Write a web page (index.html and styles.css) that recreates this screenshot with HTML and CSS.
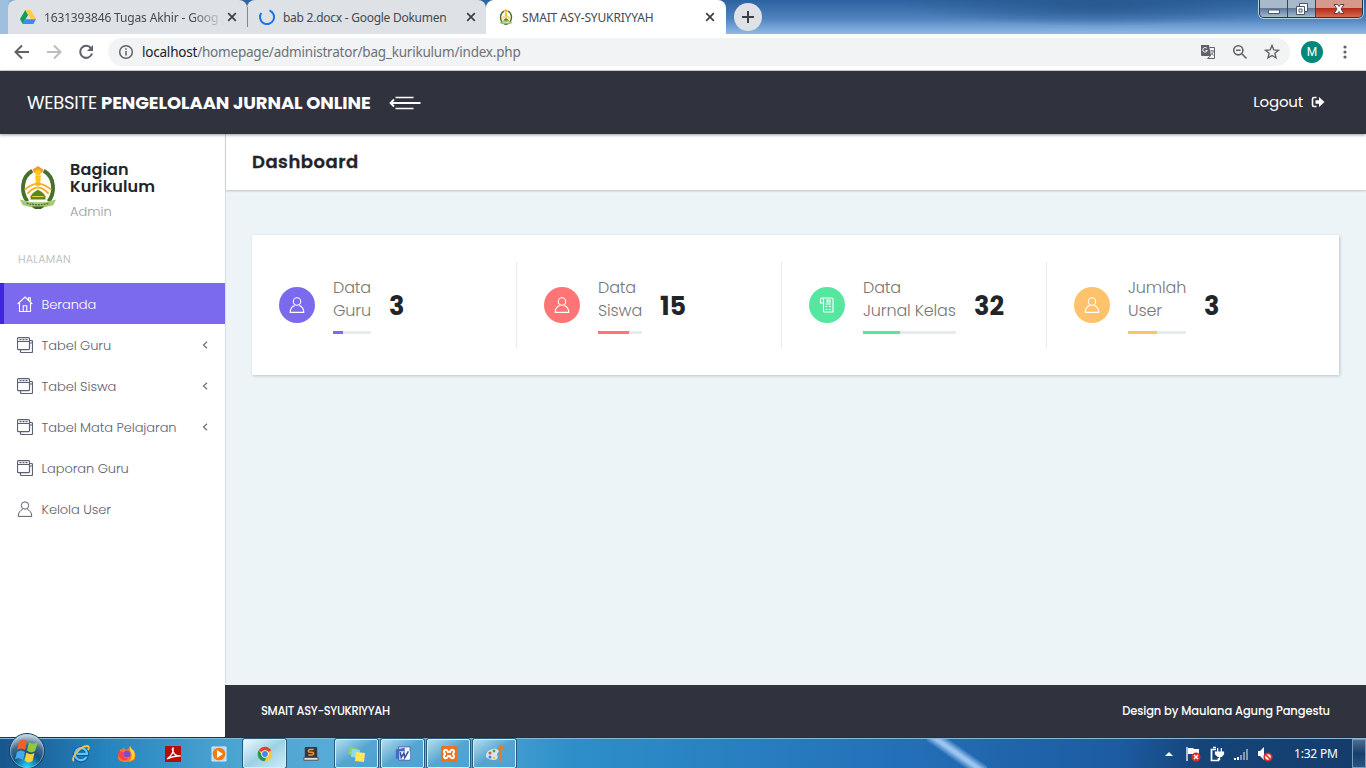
FILE: index.html
```html
<!DOCTYPE html>
<html lang="id">
<head>
<meta charset="utf-8">
<title>SMAIT ASY-SYUKRIYYAH</title>
<link rel="stylesheet" href="styles.css">
</head>
<body>
<svg class="defs" aria-hidden="true">
  <symbol id="user" viewBox="0 0 16 16"><circle cx="8" cy="4.500" r="3.700"/><path d="M5.700 8.500C3 9.500 1.300 11.500 1.200 15.400h13.600C14.700 11.500 13 9.500 10.300 8.500"/></symbol>
  <symbol id="windows" viewBox="0 0 16 16"><path d="M1.500.6h10q1 0 1 1v10q0 1-1 1h-10q-1 0-1-1v-10q0-1 1-1zM.5 4.500h12M2.500 2.600h2M5.500 2.600h2M8.500 2.600h2M12.500 3.500h2q1 0 1 1v10q0 1-1 1h-10q-1 0-1-1v-2M12.500 6h3"/></symbol>
  <symbol id="emblem" viewBox="0 0 40 46"><path d="M14 6C2 13 2 29 9 38M26 6c12 7 12 23 5 32" fill="none" stroke="#47702b" stroke-width="4"/><path d="M14 5l6-4 6 4-2 3h-8z" fill="#f29c2b"/><circle cx="20" cy="8" r="3" fill="#ffc51b"/><path d="M17 11h6l-1 11h-4z" fill="#ffc51b"/><path d="M6 26q14-13 28 0M9 30q11-13 22 0M12 34q8-12 16 0" fill="none" stroke="#f9ad24" stroke-width="2"/><path d="M12 36q1-7 8-10 7 3 8 10z" fill="#538b20"/><path d="M20 26v-4M14 33h12" stroke="#ffd348"/><path d="M1 36q19 6 38 0l-3 6q-16 5-32 0z" fill="#a9ca79"/><path d="M8 40q12 3 24 0" fill="none" stroke="#4f752b" stroke-width="1.500" stroke-dasharray="2 1"/><path d="M13 43.500h14l-4 2.500h-6z" fill="#3e621f"/></symbol>
  <symbol id="close" viewBox="0 0 10 10"><path d="M1.200 1.200l7.600 7.600M8.800 1.200L1.200 8.800" stroke="#3c4043" stroke-width="1.700"/></symbol>
</svg>

<header class="browser">
  <div class="tabs">
    <div class="tab">
      <svg class="fav" viewBox="0 0 16 14"><path d="M5.300 0L0 9l2.700 5 5.400-9z" fill="#0f9d58"/><path d="M5.300 0h5.400L16 9h-5.300z" fill="#ffcd40"/><path d="M5.400 9.300H16L13.300 14H2.700z" fill="#4285f4"/></svg>
      <span class="tab-title fade t1">1631393846 Tugas Akhir - Googl</span>
      <svg class="x"><use href="#close"/></svg>
    </div>
    <div class="tab second">
      <svg class="fav" viewBox="0 0 16 16"><path d="M10.500 1.500A7 7 0 1 1 2.300 4" fill="none" stroke="#1a73e8" stroke-width="2"/></svg>
      <span class="tab-title t2">bab 2.docx - Google Dokumen</span>
      <svg class="x"><use href="#close"/></svg>
    </div>
    <div class="tab active">
      <svg class="fav"><use href="#emblem"/></svg>
      <span class="tab-title t3">SMAIT ASY-SYUKRIYYAH</span>
      <svg class="x"><use href="#close"/></svg>
    </div>
    <svg class="plus" viewBox="0 0 28 28"><circle cx="14" cy="14" r="14" fill="#dee1e6"/><path d="M14 8v12M8 14h12" stroke="#3c4043" stroke-width="2"/></svg>
    <div class="win">
      <span><svg viewBox="0 0 14 14"><path d="M1.500 8h11v3.500h-11z" fill="#fff" stroke="#4c566b"/></svg></span>
      <span><svg viewBox="0 0 14 14"><path d="M4.500 1.500h8v8h-8z" fill="#fff" stroke="#4c566b"/><path d="M1.500 4.500h8v8h-8zM4 7h3v3H4z" fill="#fff" stroke="#4c566b"/></svg></span>
      <span class="red"><svg viewBox="0 0 14 14"><path d="M2 2.500h3.500L7 4.500l1.500-2H12L9 7l3 4.500H8.500L7 9.500l-1.500 2H2L5 7z" fill="#fff" stroke="#5c3e4a"/></svg></span>
    </div>
  </div>
  <div class="toolbar">
    <svg class="nav" viewBox="0 0 16 16"><path d="M15 8H2M8 1.500L1.500 8 8 14.500" stroke="#5f6368"/></svg>
    <svg class="nav" viewBox="0 0 16 16"><path d="M1 8h13M8 1.500L14.500 8 8 14.500" stroke="#babcbe"/></svg>
    <svg class="nav" viewBox="0 0 16 16"><path d="M13 4.200A6 6 0 1 0 14 9.500" stroke="#5f6368"/><path d="M15 1v6H9z" fill="#5f6368"/></svg>
    <div class="address">
      <svg class="info" viewBox="0 0 16 16"><circle cx="8" cy="8" r="6.300"/><path d="M8 7v4.500M8 4.300v1.500"/></svg>
      <span class="url"><b>localhost</b>/homepage/administrator/bag_kurikulum/index.php</span>
      <svg viewBox="0 0 16 16"><path d="M1 1h8l2 11H2q-1 0-1-1z" fill="#5f6368"/><path d="M9.500 3.500h5v11h-7l3-2.500" fill="none" stroke="#5f6368"/><path d="M7 4.500a2.300 2.300 0 1 0 .3 2H5.500" fill="none" stroke="#fff"/><path d="M10 7h4M12 6v1M13.500 7q-.5 3-3 4M11 8.500l2.500 3" fill="none" stroke="#5f6368" stroke-width=".8"/></svg>
      <svg viewBox="0 0 16 16"><g fill="none" stroke="#5f6368" stroke-width="1.600"><circle cx="6.300" cy="6.300" r="4.600"/><path d="M9.800 9.800l4.700 4.700M4 6.300h4.600"/></g></svg>
      <svg viewBox="0 0 16 16"><path d="M8 1.600l1.800 4.300 4.700.4-3.600 3 1.100 4.600L8 11.500l-4 2.400 1.100-4.600-3.600-3 4.700-.4z" fill="none" stroke="#5f6368" stroke-width="1.400"/></svg>
    </div>
    <div class="avatar">M</div>
    <svg class="dots" viewBox="0 0 4 16"><circle cx="2" cy="3" r="1.600"/><circle cx="2" cy="8" r="1.600"/><circle cx="2" cy="13" r="1.600"/></svg>
  </div>
</header>

<div class="site">
  <div class="topbar">
    <h1><span class="brand-light">WEBSITE</span><span class="brand-bold">PENGELOLAAN JURNAL ONLINE</span></h1>
    <svg class="toggle" viewBox="0 0 32 14"><path d="M1.500 7H31.500" stroke-width="2"/><path d="M6.500 1.500h18M6.500 12.500h18" stroke-width="1.400"/><path d="M5 3.500L1.500 7 5 10.500" stroke-width="1.800"/></svg>
    <a class="logout"><span>Logout</span><svg viewBox="0 0 14 12"><path d="M5.500 1.500H3Q1.500 1.500 1.500 3v6q0 1.500 1.500 1.500h2.500" fill="none" stroke="#fff" stroke-width="1.600"/><path d="M4.500 4.200h3.500V1L13.500 6 8 11V7.800H4.500z" fill="#fff"/></svg></a>
  </div>
  <div class="body">
    <aside class="sidebar">
      <div class="profile">
        <svg class="logo"><use href="#emblem"/></svg>
        <div><h2>Bagian<br>Kurikulum</h2><p>Admin</p></div>
      </div>
      <div class="heading">HALAMAN</div>
      <nav>
        <a class="item current"><svg class="ic" viewBox="0 0 16 16"><path d="M.7 8L8 1l7.300 7M2.500 6.500v9h11v-9M11.500 4V1.800h1.800v4M6.200 15.500V9.800h3.600v5.700"/></svg><span>Beranda</span></a>
        <a class="item"><svg class="ic"><use href="#windows"/></svg><span>Tabel Guru</span><svg class="chev" viewBox="0 0 6 8"><path d="M5 .7L1.500 4 5 7.300"/></svg></a>
        <a class="item"><svg class="ic"><use href="#windows"/></svg><span>Tabel Siswa</span><svg class="chev" viewBox="0 0 6 8"><path d="M5 .7L1.500 4 5 7.300"/></svg></a>
        <a class="item"><svg class="ic"><use href="#windows"/></svg><span>Tabel Mata Pelajaran</span><svg class="chev" viewBox="0 0 6 8"><path d="M5 .7L1.500 4 5 7.300"/></svg></a>
        <a class="item"><svg class="ic"><use href="#windows"/></svg><span>Laporan Guru</span></a>
        <a class="item"><svg class="ic thin"><use href="#user"/></svg><span>Kelola User</span></a>
      </nav>
    </aside>
    <main>
      <div class="page-title"><span>Dashboard</span></div>
      <section class="stats">
        <div class="stat violet"><i><svg><use href="#user"/></svg></i><div class="label" style="width:38px"><span>Data</span><span>Guru</span><div class="bar"><b style="width:10px"></b></div></div><strong>3</strong></div>
        <div class="stat coral"><i><svg><use href="#user"/></svg></i><div class="label" style="width:44px"><span>Data</span><span>Siswa</span><div class="bar"><b style="width:31px"></b></div></div><strong>15</strong></div>
        <div class="stat green"><i><svg viewBox="0 0 16 16"><path d="M4.500 15V2.500Q4.500 1 3 1T1.500 2.500V6h3M3 1h9.500q1.500 0 1.500 1.500V15H4.500M8 3h3v2H8zM6.500 7h5.500M6.500 9.500h2M10 9.500h2M6.500 12.500h2M10 12.500h2"/></svg></i><div class="label" style="width:93px"><span>Data</span><span>Jurnal Kelas</span><div class="bar"><b style="width:37px"></b></div></div><strong>32</strong></div>
        <div class="stat orange"><i><svg><use href="#user"/></svg></i><div class="label" style="width:58px"><span>Jumlah</span><span>User</span><div class="bar"><b style="width:29px"></b></div></div><strong>3</strong></div>
      </section>
      <footer><span class="f1">SMAIT ASY-SYUKRIYYAH</span><span class="f2">Design by Maulana Agung Pangestu</span></footer>
    </main>
  </div>
</div>

<div class="taskbar">
  <svg class="start" viewBox="0 0 38 38"><defs><radialGradient id="orb" cx=".5" cy=".95" r=".9"><stop offset="0" stop-color="#27d4ff"/><stop offset=".45" stop-color="#14527f"/><stop offset=".7" stop-color="#3e6a8d"/><stop offset="1" stop-color="#c4d6e1"/></radialGradient></defs><circle cx="19" cy="19" r="17.500" fill="url(#orb)" stroke="#173d5b"/><circle cx="19" cy="19" r="16.500" fill="none" stroke="#9ccce2" stroke-opacity=".6"/><path d="M11 9q4-3 8 0l-2 9q-4-3-8 0z" fill="#f0612b"/><path d="M21 10q4 3 9 0l-3 9q-4 3-8-.5z" fill="#91c73e"/><path d="M9 20q4-3 8 0l-2 8q-4-3-8-.5z" fill="#4aa9e8"/><path d="M18.500 20.500q4 3 8 .500l-2 8q-4 3-8-.5z" fill="#ffcf39"/></svg>
  <div class="task"><svg viewBox="0 0 18 18"><path d="M14.500 12A6 6 0 1 1 15 8.800H5" fill="none" stroke="#1456a0" stroke-width="4.200"/><path d="M14.300 12A6 6 0 1 1 15 8.800H5" fill="none" stroke="#58c6f7" stroke-width="2.300"/><path d="M2 16C-2 14 8 1 15 1q3 0 1 4" fill="none" stroke="#f4c542" stroke-width="1.800"/></svg></div>
  <div class="task"><svg viewBox="0 0 18 18"><path d="M2 4l2 1 2-3 1 3 3-1 2-3q1 3 3 4l1 1q5 11-7 11T1 9z" fill="#ff7b1c"/><path d="M12 1q1 3 4 5 3 9-5 10 5-4 1-10z" fill="#ffd23e"/><circle cx="9" cy="9" r="3.600" fill="#7650ce"/><path d="M1 5q2 2 6 3l-2 2q1 4 6 3-4 4-8 1T1 5z" fill="#ff3d57"/></svg></div>
  <div class="task"><svg viewBox="0 0 18 18"><path d="M1 1h16v16H1z" fill="#b80c0c"/><path d="M3 14c4-3 7-7 6-11-2 1 1 8 6 8s-5-1-12 3" fill="none" stroke="#fff" stroke-width="1.300"/></svg></div>
  <div class="task"><svg viewBox="0 0 18 18"><path d="M2 2h14v14H2z" fill="#b9d7ec" stroke="#d7edfa"/><circle cx="9" cy="9" r="6.300" fill="#f27b0b"/><path d="M7 5l6 4-6 4z" fill="#fff"/></svg></div>
  <div class="task open chrome"><svg viewBox="0 0 18 18"><circle cx="9" cy="9" r="7.300" fill="#f7c838"/><path d="M9 9L2.700 5.300A7.300 7.300 0 0 1 15.300 5.300z" fill="#dc4437"/><path d="M2.700 5.300A7.300 7.300 0 0 0 8.500 16.300L11.500 10.500 6 10z" fill="#239854"/><circle cx="9" cy="9" r="3.700" fill="#fff"/><circle cx="9" cy="9" r="2.900" fill="#4684e8"/></svg></div>
  <div class="task"><svg class="small" viewBox="0 0 18 18"><path d="M2 2q0-1 1-1h12q1 0 1 1v11H2z" fill="#37383b"/><path d="M1 13h16v3H1z" fill="#e3e3e3" stroke="#494949"/><path d="M12 4H8Q6 4 6 5.500T8 7h2q2 0 2 1.500T10 10H6" fill="none" stroke="#f3932c" stroke-width="1.700"/></svg></div>
  <div class="task open"><svg viewBox="0 0 18 18"><path d="M2 2l8 2-2 7-8-2z" fill="#92d260"/><path d="M4 4l8 1-1 8-8-1z" fill="#8fdaf3"/><path d="M8 7l9 1-1 9-9-1z" fill="#ffe958"/></svg></div>
  <div class="task open"><svg class="small" viewBox="0 0 18 18"><path d="M4 1h13v15H4z" fill="#f5f9ff" stroke="#4260a6"/><path d="M1 4l10-2v14L1 14z" fill="#466abd"/><path d="M5 6h12v9H5z" fill="#f7fbff"/><path d="M6 7l1 6 3-5 1 5 4-7" fill="none" stroke="#3150a0" stroke-width="1.700"/></svg></div>
  <div class="task open"><svg viewBox="0 0 18 18"><rect x="1" y="1" width="16" height="16" rx="1" fill="#ee711e"/><path d="M5 5q2-1 3 2h2q1-3 3-2t0 4q2 3 0 4t-3-2H8q-1 3-3 2t0-4q-2-3 0-4z" fill="none" stroke="#fff" stroke-width="2"/></svg></div>
  <div class="task open"><svg viewBox="0 0 18 18"><path d="M2 6Q10 1 13 6l-2 3q2 6-3 6T0 12q0-4 2-6z" fill="#d7e5ee"/><circle cx="4" cy="8" r="1.500" fill="#ec4e37"/><circle cx="8" cy="6" r="1.400" fill="#44a84b"/><circle cx="4" cy="12" r="1.500" fill="#3885d4"/><circle cx="8" cy="13" r="1.300" fill="#ecc53a"/><path d="M14 17V5M11.500 4h5l-1-3-2 1" stroke="#e77b22" stroke-width="2" fill="none"/></svg></div>
  <div class="tray">
    <svg class="caret" viewBox="0 0 8 4"><path d="M0 4l4-4 4 4z" fill="#fff"/></svg>
    <svg viewBox="0 0 16 16"><path d="M2 1v14" stroke="#fff" stroke-width="1.300"/><path d="M3 2h5l1 1h5v6H9L8 8H3z" fill="#fff"/><circle cx="11" cy="11" r="4.500" fill="#df2d25"/><path d="M9 9l4 4M13 9l-4 4" stroke="#fff" stroke-width="1.400"/></svg>
    <svg viewBox="0 0 16 16"><path d="M7 3.500H2.500v11h7V12M4 1.500h3" fill="none" stroke="#fff" stroke-width="1.700"/><path d="M6.500 6h8v2l-2 2.500H9L6.500 8zM8.700 2v4M12.300 2v4M10.600 10v4" fill="#fff" stroke="#fff" stroke-width="1.200"/></svg>
    <svg viewBox="0 0 16 16"><path d="M2 14v-2M5 14v-3" stroke="#fff" stroke-width="2"/><path d="M8 14V9M11 14V6M14 14V3" stroke="#8399b0" stroke-width="2"/></svg>
    <svg viewBox="0 0 16 16"><path d="M1 5h2l4-4v13l-4-4H1z" fill="#fff"/><circle cx="11" cy="11" r="3.700" fill="#fff" stroke="#df2d25" stroke-width="1.800"/><path d="M8.500 8.500l5 5" stroke="#df2d25" stroke-width="1.600"/></svg>
    <span class="clock">1:32 PM</span>
  </div>
  <div class="desk"></div>
</div>
</body>
</html>
```
FILE: styles.css
```css
* { box-sizing: border-box; }
body { margin: 0; width: 1366px; height: 768px; overflow: hidden; display: flex; flex-direction: column; font-family: Poppins, Inter, sans-serif; color: #212529; }
svg { display: block; flex: none; }
.defs { position: absolute; width: 0; height: 0; }

/* Browser window */
.browser { height: 71px; flex: none; font-family: "Noto Sans", sans-serif; background: #fff; border-bottom: 1px solid #d5dadd; }
.tabs { height: 34px; display: flex; background: linear-gradient(90deg, #9fbfdf 0 8px, transparent 20px), radial-gradient(ellipse 200px 22px at 1100px 4px, #28598f, transparent), linear-gradient(#2b62a0, #4f83bd 55%, #91bbe8); padding-left: 8px; }
.tab { width: 239px; height: 34px; display: flex; align-items: center; padding: 0 10px 0 12px; background: #dee1e6; border-radius: 8px 8px 0 0; }
.tab.second { padding-left: 12px; }
.tab.second::before { content: ""; width: 1px; height: 20px; background: #84888e; margin: 0 11px 0 -12px; }
.tab.active { width: 240px; padding-right: 11px; background: #fff; }
.fav { width: 16px; height: 16px; margin-right: 8px; }
.tab-title { flex: 1; min-width: 0; font-size: 12px; color: #45494d; white-space: nowrap; }
.t1 { letter-spacing: -.15px; }
.t2 { letter-spacing: -.26px; }
.t3 { letter-spacing: -.15px; }
.fade { margin-right: 9px; -webkit-mask-image: linear-gradient(90deg, #000 85%, #0003); mask-image: linear-gradient(90deg, #000 85%, #0003); }
.x { width: 10px; height: 10px; }
.plus { width: 28px; height: 28px; margin: 3px 0 0 8px; }
.win { display: flex; height: 18px; margin: 0 3px 0 auto; border: 1px solid #24364d; border-top: 0; border-radius: 0 0 5px 5px; overflow: hidden; box-shadow: 0 0 0 1px #b7cee2; }
.win span { width: 28px; display: grid; place-items: center; background: linear-gradient(#a8b9ca 45%, #60799a 50%, #a3b9d0); border-right: 1px solid #34445a; }
.win span.red { width: 46px; border: 0; background: linear-gradient(#d69a8c 45%, #b52c19 50%, #d46a4e); }
.win svg { width: 14px; height: 14px; }
.toolbar { height: 36px; display: flex; align-items: center; padding-left: 14px; }
.nav { width: 16px; height: 16px; margin-right: 16px; fill: none; stroke-width: 2; }
.address { width: 1182px; height: 28px; border-radius: 14px; background: #f1f3f4; display: flex; align-items: center; gap: 16px; padding: 0 10px; margin-left: -2px; }
.address svg { width: 16px; height: 16px; }
.address .info { margin-right: -8px; fill: none; stroke: #5f6368; stroke-width: 1.500; }
.url { font-size: 13.500px; letter-spacing: -.21px; color: #6d7175; margin-right: auto; }
.url b { font-weight: 400; color: #202124; }
.avatar { width: 22px; height: 22px; border-radius: 50%; background: #00897b; color: #fff; font: 12px/22px Roboto, sans-serif; text-align: center; margin-left: 11px; }
.dots { width: 4px; height: 16px; margin-left: 20px; fill: #5f6368; }

/* Site */
.site { flex: 1; min-height: 0; display: flex; flex-direction: column; }
.topbar { height: 63px; flex: none; background: #30333e; color: #fff; display: flex; align-items: center; padding: 0 41px 0 27px; box-shadow: 0 1px 3px #0006; position: relative; z-index: 1; }
h1 { margin: 0; display: flex; font-size: 18px; line-height: 24px; white-space: nowrap; }
.brand-light { width: 74px; font-weight: 400; letter-spacing: -.27px; }
.brand-bold { width: 288px; font-weight: 700; letter-spacing: -.1px; }
.toggle { width: 32px; height: 14px; fill: none; stroke: #fff; }
.logout { margin-left: auto; display: flex; align-items: center; gap: 8px; font-size: 15px; letter-spacing: -.2px; padding-bottom: 2px; }
.logout svg { width: 14px; height: 12px; }
.body { flex: 1; display: flex; min-height: 0; }
.sidebar { width: 226px; flex: none; background: #fff; border-right: 1px solid #d6dfe4; }
.profile { display: flex; padding: 27px 18px 0; height: 115px; }
.logo { width: 40px; height: 44px; margin: 4px 12px 0 0; }
h2 { margin: 0; font-size: 16px; line-height: 17px; font-weight: 600; letter-spacing: .15px; }
.profile p { margin: 7px 0 0; font-size: 13px; line-height: 20px; font-weight: 300; color: #999; }
.heading { height: 34px; padding-left: 18px; font-size: 11px; letter-spacing: .15px; line-height: 20px; color: #c4c4c4; }
.item { height: 41px; display: flex; align-items: center; padding: 0 17px; font-size: 13px; letter-spacing: -.07px; font-weight: 300; color: #5d6170; }
.item span { padding-top: 2px; }
.ic { width: 16px; height: 16px; margin-right: 8.600px; fill: none; stroke: #5c6073; stroke-width: 1.200; }
.thin { stroke-width: 1; }
.chev { width: 6px; height: 8px; margin-left: auto; fill: none; stroke: #6b6d7c; stroke-width: 1.200; }
.current { width: 225px; background: #7b6aed; color: #fff; border-left: 4px solid #3f25e0; padding-left: 13px; }
.current .ic { stroke: #fff; stroke-width: 1.100; }
main { flex: 1; display: flex; flex-direction: column; background: #ecf4f7; }
.page-title { height: 56px; flex: none; background: #fff; padding: 16px 26px; font-size: 18px; line-height: 24px; font-weight: 600; letter-spacing: .5px; box-shadow: 0 1px 2px #0003; }
.page-title span { -webkit-text-stroke: .3px #212529; }
.stats { margin: 45px 27px 0 26px; height: 140px; background: #fff; box-shadow: 1px 1px 3px #0003; display: flex; padding: 27px 0; }
.stat { width: 265px; display: flex; align-items: center; padding-left: 27px; border-right: 1px solid #e9ebed; }
.stat:last-child { border: 0; }
.stat i { width: 36px; height: 36px; border-radius: 50%; display: grid; place-items: center; background: var(--tone); margin-right: 18px; }
.stat i svg { width: 16px; height: 16px; fill: none; stroke: #fff; stroke-width: 1.100; }
.label { display: flex; flex-direction: column; font-size: 16px; letter-spacing: -.15px; line-height: 23px; font-weight: 300; color: #777; white-space: nowrap; }
.bar { height: 3px; margin-top: 9px; background: #e7eaed; border-radius: 1px; }
.bar b { display: block; height: 3px; background: var(--tone); }
strong { margin-left: 18px; padding-top: 2px; font-size: 25.500px; font-weight: 700; }
.violet { --tone: #7b6aed; } .coral { --tone: #ff7575; } .green { --tone: #56e69f; } .orange { --tone: #ffc26c; }
footer { margin-top: auto; margin-left: -1px; height: 53px; padding: 0 36px; background: #30333e; color: #fff; display: flex; align-items: center; justify-content: space-between; font-size: 11.500px; font-weight: 500; }
.f1 { letter-spacing: -.35px; }
.f2 { letter-spacing: -.1px; }

/* Desktop taskbar */
.taskbar { height: 30px; flex: none; display: flex; position: relative; z-index: 2; padding-left: 59px; border-top: 1px solid #86b9d5; box-shadow: 0 -1px #183447; background: linear-gradient(90deg, #18568c, #2685bf 8%, #49a2cf 16%, #62b1da 30%, #2d8fc9 42%, #2471b9 65%, #1c5ba1 82%, #164478 88%, #143c6c); }
.taskbar::before { content: ""; position: absolute; left: 927px; top: 0; width: 60px; height: 29px; background: linear-gradient(35deg, transparent 37%, #9bc5f0 48%, #9bc5f0 52%, transparent 63%); }
.start { position: absolute; left: 8px; top: -7px; width: 38px; height: 38px; }
.task { width: 43px; height: 29px; margin-right: 3px; display: grid; place-items: center; border-radius: 2px; }
.task svg { width: 18px; height: 18px; }
.task .small { width: 16px; height: 16px; }
.open { border: 1px solid #cfeeff; box-shadow: 0 0 0 1px #285b7c; background: linear-gradient(145deg, #b3ddec, #55a5d0 50%, #4ba2d7); }
.chrome { background: linear-gradient(145deg, #edf8ff, #9ed0e5 50%, #c9edf8); }
.tray { margin-left: auto; display: flex; align-items: center; gap: 8px; color: #fff; font: 12px "Noto Sans", sans-serif; }
.tray svg { width: 16px; height: 16px; }
.tray .caret { width: 8px; height: 4px; margin-right: 4px; }
.clock { width: 43px; margin: 0 15px 0 13px; white-space: nowrap; letter-spacing: -.2px; }
.desk { width: 14px; border: 1px solid #7c9bb9; background: linear-gradient(#4c6d93, #173e6b 50%, #285582); }
```
